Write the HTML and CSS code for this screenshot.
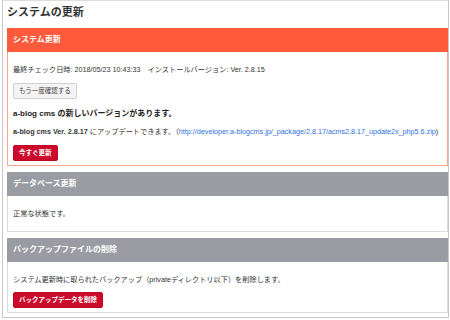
FILE: index.html
```html
<!DOCTYPE html>
<html lang="ja">
<head>
    <meta charset="UTF-8">
    <meta name="viewport" content="width=device-width, initial-scale=1.0">
    <title>システムの更新</title>
    <link rel="stylesheet" href="styles.css">
</head>
<body>
    <div class="page">
        <h1 class="page-title">システムの更新</h1>

        <div class="panel panel-update">
            <div class="panel-header">システム更新</div>
            <div class="panel-body">
                <p class="text">最終チェック日時: 2018/05/23 10:43:33　インストールバージョン: Ver. 2.8.15</p>
                <button class="btn btn-default">もう一度確認する</button>
                <h2 class="notice">a-blog cms の新しいバージョンがあります。</h2>
                <p class="text text-update"><strong>a-blog cms Ver. 2.8.17</strong> にアップデートできます。（<a href="#">http://developer.a-blogcms.jp/_package/2.8.17/acms2.8.17_update2x_php5.6.zip</a>)</p>
                <button class="btn btn-danger">今すぐ更新</button>
            </div>
        </div>

        <div class="panel">
            <div class="panel-header">データベース更新</div>
            <div class="panel-body panel-body-simple">
                <p class="text">正常な状態です。</p>
            </div>
        </div>

        <div class="panel">
            <div class="panel-header">バックアップファイルの削除</div>
            <div class="panel-body">
                <p class="text">システム更新時に取られたバックアップ（privateディレクトリ以下）を削除します。</p>
                <button class="btn btn-danger btn-backup">バックアップデータを削除</button>
            </div>
        </div>
    </div>
</body>
</html>
```

FILE: styles.css
```css
body {
    font-family: "Liberation Sans", "Noto Sans CJK JP", sans-serif;
    color: #333;
    background-color: #fff;
    margin: 0;
}

.page {
    margin: 0 1px 0 2px;
    padding: 0 0 4px 4px;
    border: 1px solid #c8c8c8;
    border-top-color: #ddd;
    height: 312px;
    overflow: hidden;
}

.page-title {
    font-size: 11px;
    font-weight: bold;
    line-height: 16px;
    margin: 3px 0 8px;
    color: #333;
}

.panel {
    border: 1px solid #dcdcdc;
    margin-bottom: 6px;
}

.panel-header {
    height: 24px;
    line-height: 24px;
    margin: -1px -1px 0;
    padding-left: 6px;
    background-color: #9a9ba3;
    color: #fff;
    font-size: 8px;
    font-weight: bold;
}

.panel-update {
    border-color: #ffa28e;
}

.panel-update .panel-header {
    background-color: #ff5a3c;
}

.panel-body {
    padding: 12px 5px 4px;
}

.panel-body-simple {
    padding-bottom: 11px;
}

.text {
    font-size: 7.2px;
    line-height: 12px;
    margin: 0;
    white-space: nowrap;
}

.text strong {
    font-weight: bold;
}

.text a {
    color: #2f6fdf;
    text-decoration: none;
}

.text-update {
    margin-top: 5px;
}

.notice {
    font-size: 8px;
    font-weight: bold;
    line-height: 14px;
    margin: 8px 0 0;
    color: #222;
}

.btn {
    display: block;
    height: 16px;
    padding: 0 5px;
    border-radius: 2px;
    font-family: inherit;
    font-size: 6.5px;
    line-height: 14px;
    margin-top: 7px;
    cursor: pointer;
}

.btn-default {
    background-color: #f4f4f4;
    border: 1px solid #d0d0d0;
    color: #444;
}

.btn-danger {
    background-color: #cc0b2c;
    border: 1px solid #c00826;
    color: #fff;
    font-weight: bold;
}

.btn-backup {
    margin-top: 6px;
}
```
